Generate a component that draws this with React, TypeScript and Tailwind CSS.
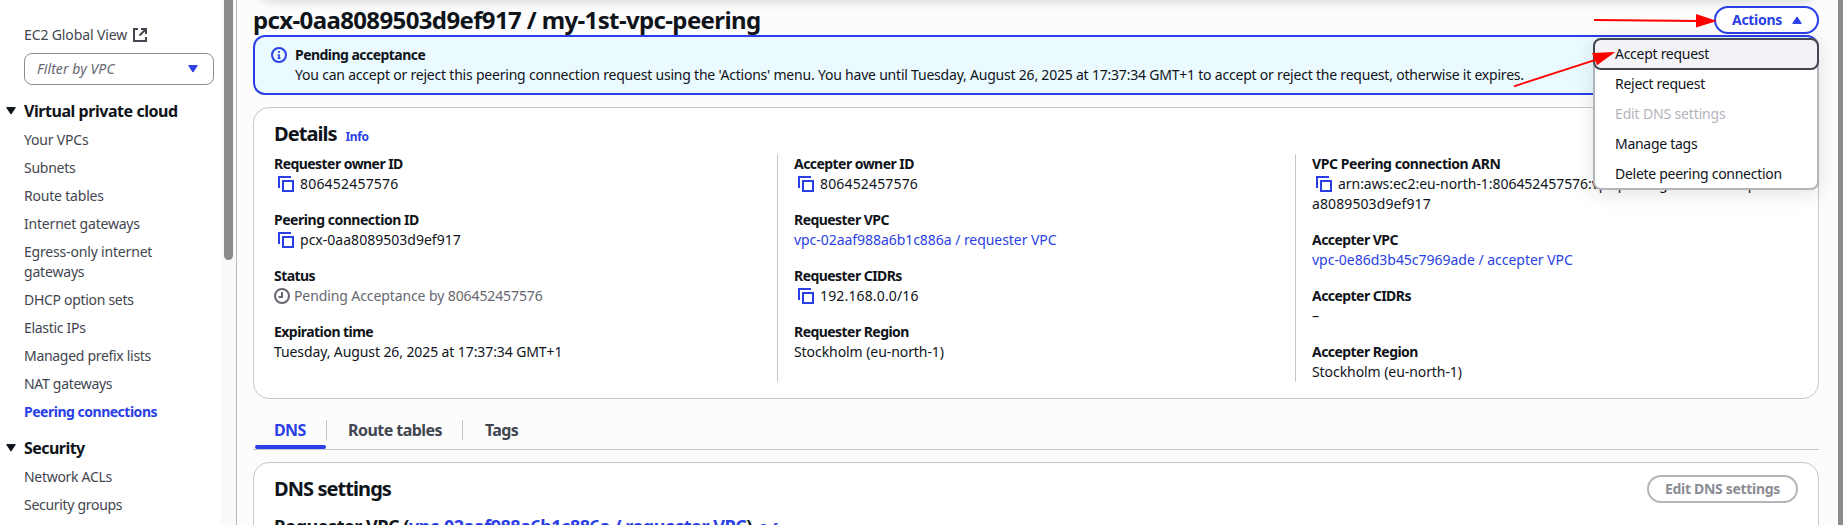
import type { ReactNode } from 'react';

function CopyIcon() {
  return (
    <svg className="ml-1 mr-1.5 h-4 w-4 shrink-0 translate-y-0.5" viewBox="0 0 16 16" fill="none" stroke="#2a3fe5" strokeWidth="2">
      <path d="M1 12V1h12" />
      <path d="M5 5h10v10H5z" />
    </svg>
  );
}

function ExternalIcon() {
  return (
    <svg className="ml-[5px] mt-0.5 h-4 w-4" viewBox="0 0 16 16" fill="none" stroke="#424650" strokeWidth="2">
      <path d="M6 2H2v12h12v-4" />
      <path d="M9 2h5v5M14 2 7.5 8.5" />
    </svg>
  );
}

function InfoIcon() {
  return (
    <svg className="h-4 w-4 shrink-0" viewBox="0 0 16 16" fill="none" stroke="#2a3fe5" strokeWidth="2">
      <circle cx="8" cy="8" r="7" />
      <path d="M8 11.5V8H6.6M6.5 11.3h3M8 4v2" strokeWidth="1.6" />
    </svg>
  );
}

function ClockIcon() {
  return (
    <svg className="mr-1 mt-0.5 h-4 w-4" viewBox="0 0 16 16" fill="none" stroke="#656871" strokeWidth="2">
      <circle cx="8" cy="8" r="7" />
      <path d="M8 4v5H4.5" />
    </svg>
  );
}

function Caret({ className, up }: { className: string; up?: boolean }) {
  return (
    <svg className={className} viewBox="0 0 10 8" fill="currentColor" stroke="currentColor" strokeLinejoin="round">
      <path d={up ? 'M5 .9 9.3 7.4H.7z' : 'M5 7.1.7.6h8.6z'} />
    </svg>
  );
}

function NavHeading({ children, className }: { children: string; className: string }) {
  return (
    <div className={`flex items-center pl-1.5 text-base leading-5 font-bold text-[#0f141a] ${className}`}>
      <Caret className="mr-2 h-2 w-2.5" />
      {children}
    </div>
  );
}

function NavLink({ children, className = 'tracking-[-0.3px]' }: { children: ReactNode; className?: string }) {
  return <li className={className}>{children}</li>;
}

function Field({ label, copy, children, labelClass = 'tracking-[-0.55px]' }: { label: string; copy?: boolean; children: ReactNode; labelClass?: string }) {
  return (
    <div>
      <div className={`font-bold ${labelClass}`}>{label}</div>
      <div className="flex">
        {copy && <CopyIcon />}
        {children}
      </div>
    </div>
  );
}

function Sidebar() {
  return (
    <aside className="flex w-[237px] shrink-0 border-r border-[#b9b9c0] bg-white">
      <nav className="w-[221px] shrink-0 pt-[25px] text-[#424650]">
        <div className="flex pl-6 tracking-[-0.12px]">
          EC2 Global View
          <ExternalIcon />
        </div>
        <div className="mt-2 ml-6 flex h-8 w-[190px] items-center justify-between rounded-lg border border-[#8c8c94] pr-[15px] pl-3">
          <span className="tracking-[0.08px] text-[#656871] italic">Filter by VPC</span>
          <Caret className="h-2 w-2.5 text-[#2a3fe5]" />
        </div>
        <NavHeading className="mt-4 tracking-[-0.45px]">Virtual private cloud</NavHeading>
        <ul className="mt-[9px] flex flex-col gap-2 pl-6">
          <NavLink className="tracking-[-0.2px]">Your VPCs</NavLink>
          <NavLink className="tracking-[-0.25px]">Subnets</NavLink>
          <NavLink className="tracking-[-0.2px]">Route tables</NavLink>
          <NavLink className="tracking-[-0.2px]">Internet gateways</NavLink>
          <NavLink className="tracking-[-0.18px]">
            Egress-only internet
            <br />
            gateways
          </NavLink>
          <NavLink>DHCP option sets</NavLink>
          <NavLink>Elastic IPs</NavLink>
          <NavLink>Managed prefix lists</NavLink>
          <NavLink>NAT gateways</NavLink>
          <NavLink className="font-bold tracking-[-0.49px] text-[#2a3fe5]">Peering connections</NavLink>
        </ul>
        <NavHeading className="mt-4 tracking-[-0.55px]">Security</NavHeading>
        <ul className="mt-[9px] flex flex-col gap-2 pl-6">
          <NavLink>Network ACLs</NavLink>
          <NavLink>Security groups</NavLink>
        </ul>
      </nav>
      <div className="flex grow justify-center bg-[#fafafa] pr-px">
        <div className="h-[260px] w-[9px] rounded-b-full bg-[#8b8b8b]" />
      </div>
    </aside>
  );
}

function ActionsMenu() {
  return (
    <ul className="absolute top-[38px] right-0 z-10 h-[152px] w-[226px] rounded-lg border-2 border-[#b4b4bb] bg-white tracking-[-0.28px] text-[#0f141a] shadow-[0_4px_20px_1px_rgba(0,7,22,0.1)]">
      <li className="-mx-0.5 -mt-0.5 h-8 rounded-lg border-2 border-[#424650] bg-[#f3f3f7] pt-1 pl-5">Accept request</li>
      <li className="h-[30px] pt-1 pl-5">Reject request</li>
      <li className="h-[30px] pt-1 pl-5 tracking-[-0.15px] text-[#b4b4bb]">Edit DNS settings</li>
      <li className="h-[30px] pt-1 pl-5">Manage tags</li>
      <li className="h-[30px] pt-1 pl-5">Delete peering connection</li>
    </ul>
  );
}

function Details() {
  return (
    <section className="mt-3 h-[292px] rounded-2xl border border-[#c6c6cd] bg-white pt-3.5 pl-5">
      <div className="flex items-baseline gap-[9px]">
        <h2 className="text-xl leading-6 font-bold tracking-[-0.96px]">Details</h2>
        <span className="text-xs leading-4 font-bold tracking-[-0.4px] text-[#2a3fe5]">Info</span>
      </div>
      <div className="mt-2 flex h-[228px]">
        <div className="flex w-[503px] flex-col gap-4">
          <Field label="Requester owner ID" copy>
            <span className="tracking-[0.2px]">806452457576</span>
          </Field>
          <Field label="Peering connection ID" labelClass="tracking-[-0.47px]" copy>
            <span className="tracking-[0.02px]">pcx-0aa8089503d9ef917</span>
          </Field>
          <Field label="Status">
            <ClockIcon />
            <span className="tracking-[-0.1px] text-[#656871]">Pending Acceptance by 806452457576</span>
          </Field>
          <Field label="Expiration time">
            <span className="tracking-[-0.1px]">Tuesday, August 26, 2025 at 17:37:34 GMT+1</span>
          </Field>
        </div>
        <div className="flex w-[518px] flex-col gap-4 border-l border-[#c6c6cd] pl-4">
          <Field label="Accepter owner ID" copy>
            <span className="tracking-[0.16px]">806452457576</span>
          </Field>
          <Field label="Requester VPC">
            <span className="tracking-[-0.05px] text-[#2a3fe5]">vpc-02aaf988a6b1c886a / requester VPC</span>
          </Field>
          <Field label="Requester CIDRs" copy>
            <span className="tracking-[0.15px]">192.168.0.0/16</span>
          </Field>
          <Field label="Requester Region">
            <span className="tracking-[-0.07px]">Stockholm (eu-north-1)</span>
          </Field>
        </div>
        <div className="flex flex-col gap-4 border-l border-[#c6c6cd] pl-4">
          <div>
            <Field label="VPC Peering connection ARN" labelClass="tracking-[-0.43px]" copy>
              <span className="tracking-[-0.05px]">
                arn:aws:ec2:eu-north-1:806452457576:<span className="tracking-[-0.2px]">vpc-peering-connection/pcx-0a</span>
              </span>
            </Field>
            <div className="tracking-[0.1px]">a8089503d9ef917</div>
          </div>
          <Field label="Accepter VPC">
            <span className="tracking-[-0.02px] text-[#2a3fe5]">vpc-0e86d3b45c7969ade / accepter VPC</span>
          </Field>
          <Field label="Accepter CIDRs">–</Field>
          <Field label="Accepter Region">
            <span className="tracking-[-0.07px]">Stockholm (eu-north-1)</span>
          </Field>
        </div>
      </div>
    </section>
  );
}

function Tabs() {
  return (
    <div className="mt-[13px] flex h-[38px] border-b border-[#c6c6cd] text-base leading-5 font-bold tracking-[-0.6px] text-[#424650]">
      <div className="ml-0.5 w-[71px] rounded-sm pt-2 text-[#2a3fe5]">
        <div className="h-[25px] pl-[19px]">DNS</div>
        <div className="h-1 rounded-xs bg-[#2a3fe5]" />
      </div>
      <div className="mt-2 h-5 w-[136px] border-l border-[#c6c6cd] pl-[21px] tracking-[-0.55px]">Route tables</div>
      <div className="mt-2 h-5 border-l border-[#c6c6cd] pl-[22px]">Tags</div>
    </div>
  );
}

export default function App() {
  return (
    <div className="relative flex h-[525px] w-full overflow-hidden bg-[#fcfcfd] font-['Noto_Sans',sans-serif] text-sm leading-5 text-[#0f141a]">
      <Sidebar />
      <main className="relative min-w-0 grow pr-[19px] pl-4">
        <div className="absolute -top-4 right-[22px] left-5 h-4 rounded-b-2xl shadow-[0_1px_8px_2px_rgba(0,7,22,0.12)]" />
        <div className="relative">
          <header className="flex h-[35px] items-start justify-between">
            <h1 className="mt-[5px] text-2xl leading-[30px] font-bold tracking-[-0.63px]">pcx-0aa8089503d9ef917 / my-1st-vpc-peering</h1>
            <button className="mt-1.5 flex h-7 w-[105px] items-center justify-between rounded-full border-2 border-[#2a3fe5] bg-white pr-[15px] pl-4 font-bold tracking-[-0.3px] text-[#2a3fe5]">
              Actions
              <Caret up className="h-2 w-2.5" />
            </button>
          </header>
          <div className="flex h-[60px] gap-2 rounded-xl border-2 border-[#2a3fe5] bg-[#ebfaff] pt-2 pl-4">
            <div className="pt-0.5">
              <InfoIcon />
            </div>
            <div>
              <div className="font-bold tracking-[-0.54px]">Pending acceptance</div>
              <div className="whitespace-nowrap tracking-[-0.21px]">
                You can accept or reject this peering connection request using the 'Actions' menu. You have until Tuesday, August 26, 2025 at 17:37:34 GMT+1 to accept or reject the request, otherwise it expires.
              </div>
            </div>
          </div>
          <ActionsMenu />
        </div>
        <Details />
        <Tabs />
        <section className="mt-3 h-[100px] rounded-t-2xl border border-[#c6c6cd] bg-white pt-3 pr-5 pl-5">
          <div className="flex h-7 items-center justify-between">
            <h2 className="text-xl leading-6 font-bold tracking-[-0.93px]">DNS settings</h2>
            <button className="flex h-7 w-[151px] items-center justify-center rounded-full border-2 border-[#b4b4bb] bg-white font-bold tracking-[-0.3px] text-[#8c8c94]">Edit DNS settings</button>
          </div>
          <div className="mt-3 flex items-baseline gap-[9px]">
            <h3 className="text-lg leading-[22px] font-bold tracking-[-0.46px]">
              Requester VPC (<span className="text-[#2a3fe5]">vpc-02aaf988a6b1c886a / requester VPC</span>)
            </h3>
            <span className="text-xs leading-4 font-bold tracking-[-0.4px] text-[#2a3fe5]">Info</span>
          </div>
        </section>
      </main>
      <div className="w-[5px] shrink-0 bg-[#8b8b8b]" />
      <svg className="pointer-events-none absolute top-0 left-[1500px] z-20 h-[100px] w-[230px]" viewBox="1500 0 230 100" fill="#ff0000" stroke="#ff0000">
        <path d="M1594 20 1700 21M1514 86.3 1597 59.3" strokeWidth="1.8" />
        <path d="M1696 14v13.5L1717 21zM1592 53l5 12.3L1615.3 52z" stroke="none" />
      </svg>
    </div>
  );
}
